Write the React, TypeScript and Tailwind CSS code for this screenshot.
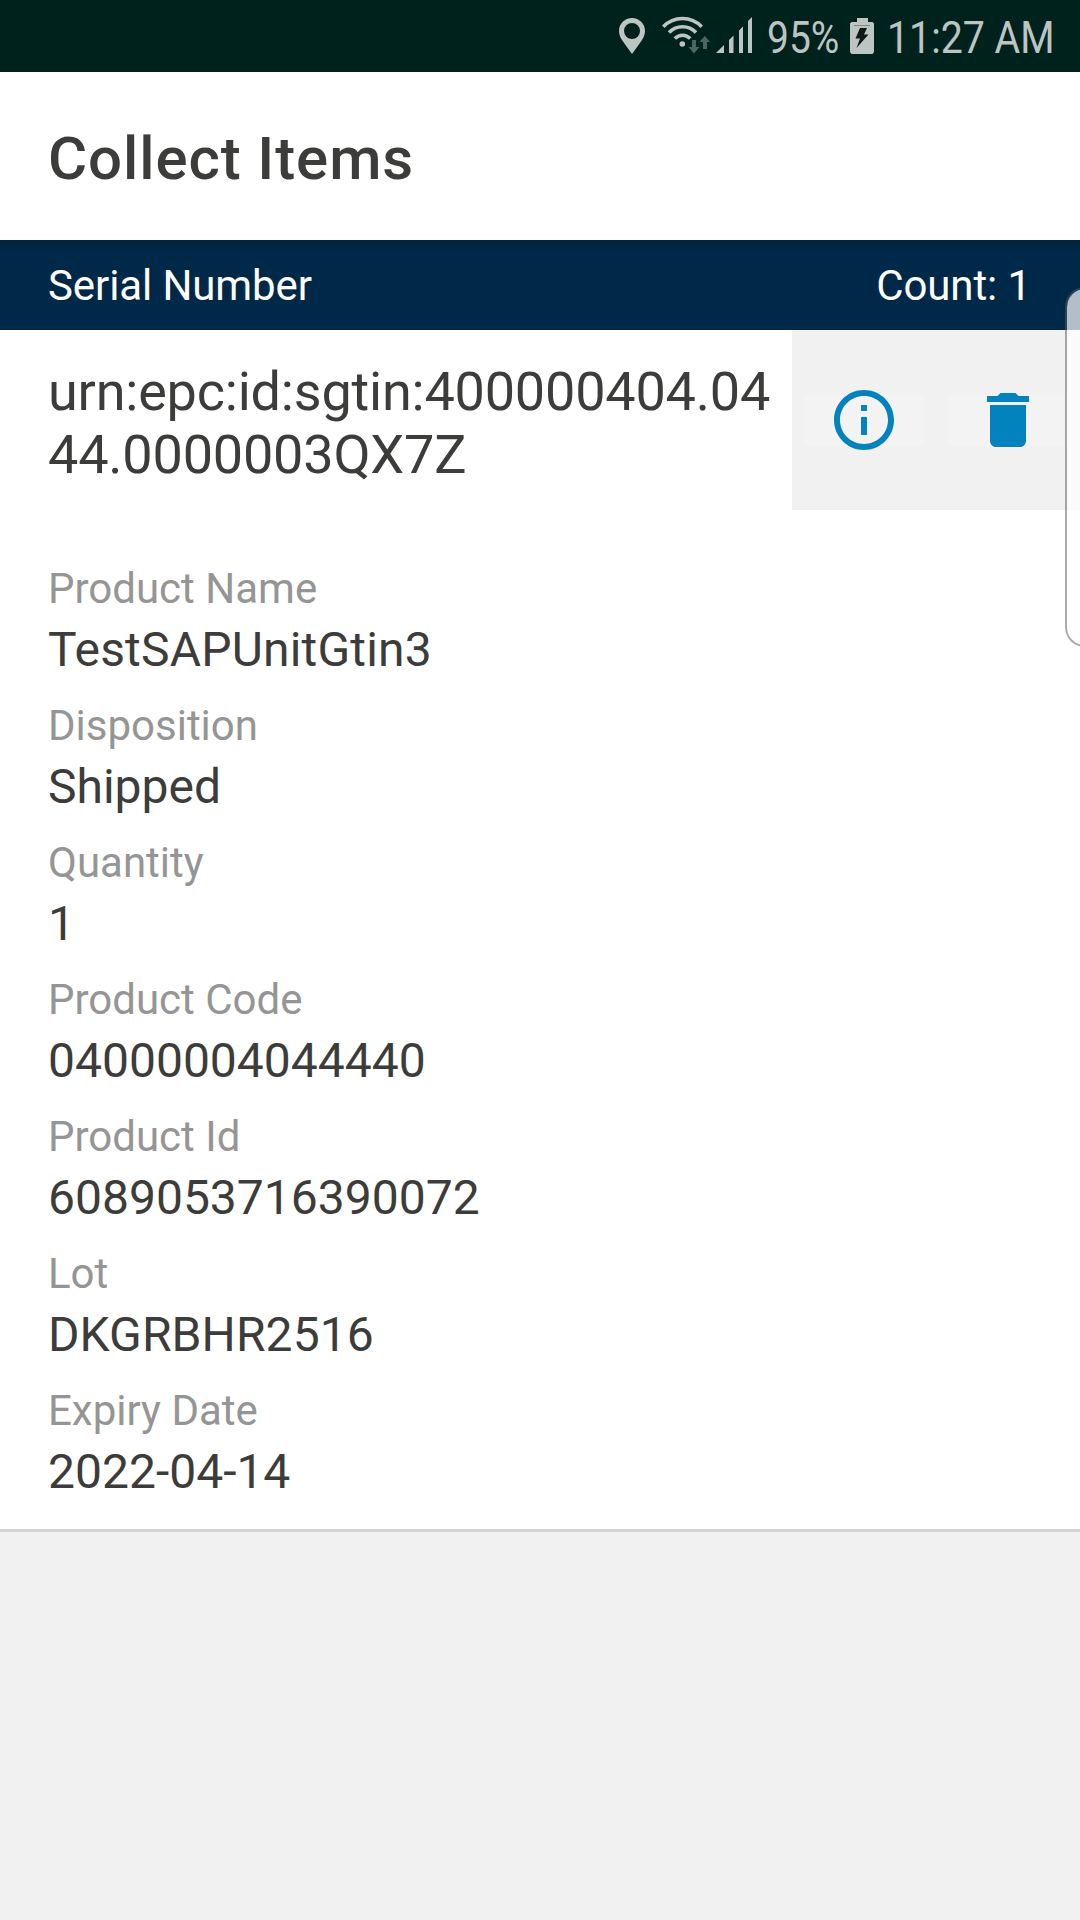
import { MdDelete, MdInfoOutline } from "react-icons/md";

const fields = [
  { label: "Product Name", value: "TestSAPUnitGtin3", valueClass: "tracking-[0.19px]" },
  { label: "Disposition", value: "Shipped" },
  { label: "Quantity", value: "1" },
  { label: "Product Code", value: "04000004044440" },
  { label: "Product Id", value: "6089053716390072" },
  { label: "Lot", value: "DKGRBHR2516", valueClass: "tracking-[0.1px]" },
  { label: "Expiry Date", value: "2022-04-14" },
];

function LocationIcon() {
  return (
    <svg width="26" height="36" viewBox="0 0 26 36" className="mr-[17px]">
      <path
        fillRule="evenodd"
        fill="currentColor"
        d="M13 0C5.800 0 0 5.600 0 13c0 4 1.600 7 4 10.500L13 36l9-12.500C24.400 20 26 17 26 13 26 5.600 20.200 0 13 0zm0 21a8 8 0 1 1 0-16 8 8 0 0 1 0 16z"
      />
    </svg>
  );
}

function WifiIcon() {
  return (
    <svg width="48" height="36" viewBox="0 0 48 36" className="mr-1.5 overflow-visible">
      <g fill="none" stroke="currentColor" strokeWidth="3.600">
        <path d="M1.300 8.700C12-2.200 29-2.200 39.700 8.700" />
        <path d="M7 14.500c7.500-7.700 19.500-7.700 27 0" />
        <path d="M12.800 20.500c4.500-4.400 11-4.400 15.400 0" />
      </g>
      <circle cx="20.300" cy="26" r="2.800" fill="currentColor" />
      <g fill="#4d6661">
        <path d="M30 22h4v7h3.500L32 35.500 26.500 29H30z" />
        <path d="M41 31h4v-7h3l-5.200-6L37.500 24H41z" />
      </g>
    </svg>
  );
}

function SignalIcon() {
  return (
    <svg width="36" height="36" viewBox="0 0 36 36" className="mr-[15px] overflow-visible" fill="currentColor">
      <path d="M0 35l8-8v8zM13 22l4.500-4.500V35H13zM23 12.500L27 8.500V35h-4zM32 3l4-4v36h-4z" />
    </svg>
  );
}

function BatteryIcon() {
  return (
    <svg width="24" height="36" viewBox="0 0 24 36" className="mr-[13px]">
      <path fill="currentColor" d="M7 0h11v4h4.500L24 5.500V34l-1.500 2h-21L0 34V5.500L1.500 4H7z" />
      <path d="M4 7.500h16" stroke="#7e8a87" strokeWidth="1" />
      <path fill="#0c1a17" d="M10 10h7l-3 6.500h4.500L6.500 30l3.500-9.500H5.500z" />
    </svg>
  );
}

function StatusBar() {
  return (
    <div className="h-[72px] bg-[#00221c] flex items-center justify-end text-[#bdc5c3] text-[45px] leading-[72px] whitespace-nowrap">
      <LocationIcon />
      <WifiIcon />
      <SignalIcon />
      <span className="w-[83px]">
        <span className="inline-block origin-left scale-x-[0.865] translate-y-[2px]">95%</span>
      </span>
      <BatteryIcon />
      <span className="w-[193px]">
        <span className="inline-block origin-left scale-x-[0.873] translate-y-[2px]">11:27 AM</span>
      </span>
    </div>
  );
}

function ItemActions() {
  return (
    <div className="flex-1 flex items-center justify-center gap-6 bg-[#f1f1f1] text-[#0283be]">
      <button className="w-[120px] h-[51px] rounded-md bg-[#f3f3f3] flex items-center justify-center">
        <MdInfoOutline className="size-[72px] shrink-0" />
      </button>
      <button className="w-[120px] h-[51px] rounded-md bg-[#f3f3f3] flex items-center justify-center">
        <MdDelete className="size-[72px] shrink-0" />
      </button>
    </div>
  );
}

export default function App() {
  return (
    <div className="relative h-[1920px] w-[1080px] overflow-hidden bg-[#f1f1f1] font-[Roboto,sans-serif] text-[#3c3c3a]">
      <StatusBar />
      <header className="h-[168px] bg-white px-12 pt-[5px] flex items-center">
        <h1 className="text-[60px] font-medium tracking-[0.9px]">Collect Items</h1>
      </header>
      <div className="h-[90px] bg-[#002849] bg-linear-to-b from-[#00243a] to-[#002849] to-[12px] text-white pl-12 pr-[49px] flex items-center justify-between text-[42px] tracking-[-0.1px]">
        <span>Serial Number</span>
        <span>Count: 1</span>
      </div>
      <main className="bg-white h-[1202px] border-b-3 border-[#d4d4d4]">
        <div className="flex h-[180px]">
          <div className="w-[792px] pl-12 pt-[30px] text-[54px] leading-[63px] tracking-[-0.2px] break-all">
            urn:epc:id:sgtin:400000404.0444.0000003QX7Z
          </div>
          <ItemActions />
        </div>
        <dl className="px-12 pt-[39px]">
          {fields.map(({ label, value, valueClass }) => (
            <div key={label} className="h-[137px] pt-3">
              <dt className="text-[42px] leading-[56px] text-[#959595]">{label}</dt>
              <dd className={`text-[48px] leading-[66px] ${valueClass ?? ""}`}>{value}</dd>
            </div>
          ))}
        </dl>
      </main>
      {/* edge panel handle */}
      <div className="absolute top-[287px] -right-3 w-[27px] h-[360px] rounded-l-[20px] border-2 border-[#5a5a5a]/50 bg-white/70 bg-clip-padding" />
    </div>
  );
}
